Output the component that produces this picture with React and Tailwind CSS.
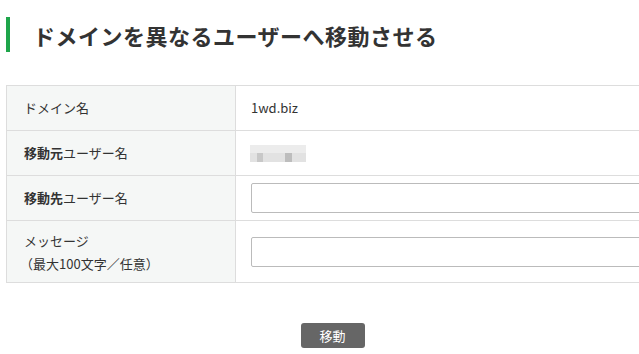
import React from 'react';

const font = { fontFamily: '"Noto Sans CJK JP", "Liberation Sans", sans-serif' };

const Blurred = () => (
  <div className="relative w-[56px] h-[17px]">
    <div className="absolute inset-x-0 top-0 h-[8px] bg-[#ececec]" />
    <div className="absolute inset-x-0 top-[8px] h-[9px] bg-[#e2e2e2]" />
    <div className="absolute left-[7px] top-[8px] w-[6px] h-[9px] bg-[#c8c8c8]" />
    <div className="absolute left-[35px] top-[8px] w-[7px] h-[9px] bg-[#bdbdbd]" />
  </div>
);

export default function App() {
  return (
    <div className="w-[639px] h-[354px] overflow-hidden bg-white text-[#333]" style={font}>
      {/* Heading */}
      <div className="flex items-center h-[35px] mt-[17px] ml-[6px] border-l-4 border-[#1ea54a] pl-[23px]">
        <h1 className="text-[22px] font-bold leading-none tracking-[0.5px]">ドメインを異なるユーザーへ移動させる</h1>
      </div>

      {/* Form table */}
      <div className="ml-[6px] mt-[33px] w-[720px] border-t border-l border-b border-[#dddddd] text-[13px]">
        <div className="flex h-[45px] border-b border-[#dddddd]">
          <div className="w-[229px] shrink-0 bg-[#f5f7f6] border-r border-[#dddddd] flex items-center pl-[17px]">ドメイン名</div>
          <div className="flex-1 flex items-center pl-[15px]">1wd.biz</div>
        </div>
        <div className="flex h-[45px] border-b border-[#dddddd]">
          <div className="w-[229px] shrink-0 bg-[#f5f7f6] border-r border-[#dddddd] flex items-center pl-[17px]">
            <span className="font-bold">移動元</span>ユーザー名
          </div>
          <div className="flex-1 flex items-center pl-[14px]"><Blurred /></div>
        </div>
        <div className="flex h-[45px] border-b border-[#dddddd]">
          <div className="w-[229px] shrink-0 bg-[#f5f7f6] border-r border-[#dddddd] flex items-center pl-[17px]">
            <span className="font-bold">移動先</span>ユーザー名
          </div>
          <div className="flex-1 flex items-center pl-[15px]">
            <input className="w-full h-[30px] border border-[#bbbbbb] rounded-[2px] bg-white outline-none" />
          </div>
        </div>
        <div className="flex h-[61px]">
          <div className="w-[229px] shrink-0 bg-[#f5f7f6] border-r border-[#dddddd] flex flex-col justify-center pl-[17px] leading-[23px]">
            <span>メッセージ</span>
            <span className="-ml-[4px]">（最大100文字／任意）</span>
          </div>
          <div className="flex-1 flex items-center pl-[15px]">
            <input className="w-full h-[30px] border border-[#bbbbbb] rounded-[2px] bg-white outline-none" />
          </div>
        </div>
      </div>

      <div className="flex justify-center mt-[40px] pl-[26px]">
        <button className="w-[64px] h-[25px] rounded-[3px] bg-[#666666] text-white text-[13px] leading-none">移動</button>
      </div>
    </div>
  );
}
